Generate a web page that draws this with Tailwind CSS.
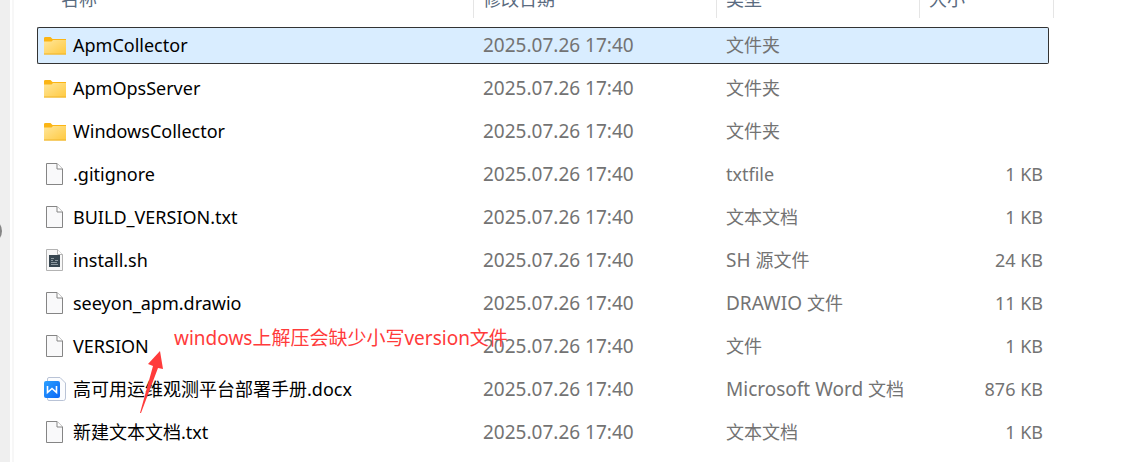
<!DOCTYPE html>
<html lang="zh-CN">
<head>
    <meta charset="UTF-8">
    <meta name="viewport" content="width=device-width, initial-scale=1.0">
    <title>文件列表</title>
    <script src="https://cdn.jsdelivr.net/npm/@tailwindcss/browser@4"></script>
</head>

<body class="relative flex min-h-screen overflow-hidden bg-white font-['Noto_Sans','Noto_Sans_CJK_SC',sans-serif] text-[18px] leading-6 text-[#737373]">
    <!-- 图标 -->
    <svg class="absolute size-0">
        <defs>
            <linearGradient id="folderFill" x1="0" y1="0" x2="1" y2="1">
                <stop offset="0" stop-color="#ffe69a"/>
                <stop offset="1" stop-color="#ffc93f"/>
            </linearGradient>
            <linearGradient id="wordFill" x1="0" y1="0" x2="1" y2="1">
                <stop offset="0" stop-color="#2ba0ff"/>
                <stop offset="1" stop-color="#0a66f5"/>
            </linearGradient>
        </defs>
        <symbol id="folder" viewBox="0 0 22 24">
            <path d="M0 5Q0 4 1.500 4H6.500L8.500 6H22V10H0Z" fill="#fbb515"/>
            <path d="M0 8.500H7.500L9 7H22V21.500H0Z" fill="url(#folderFill)"/>
            <path d="M0 21H22" stroke="#eeb42c"/>
        </symbol>
        <symbol id="file" viewBox="0 -1 22 24">
            <path d="M2.500 0.500H13L18.500 6V21.500H2.500Z" fill="#f9f9fa" stroke="#858585"/>
            <path d="M13 0.500V6H18.500" fill="#fff" stroke="#858585"/>
        </symbol>
        <symbol id="script" viewBox="0 -1 22 24">
            <path d="M2.500 0.500H13.500L18.500 5.500V21.500H2.500Z" fill="#f7f7f7" stroke="#b3b3b3"/>
            <path d="M13.500 0.500V5.500H18.500" fill="#fff" stroke="#b3b3b3"/>
            <path d="M5 6H16V18H5Z" fill="#374650"/>
            <path d="M7 9.500H10M7 11.500H9M7 13.500H13M7 15.500H14M11 11.500H14" stroke="#8d989f"/>
        </symbol>
        <symbol id="word" viewBox="0 0 22 24">
            <path d="M5 0.500H16L21.500 6V21Q21.500 23.500 19.500 23.500H5Q3.500 23.500 3.500 22V2Q3.500 0.500 5 0.500Z" fill="#fbfcfe" stroke="#b9c3d6"/>
            <rect x="0" y="4" width="16" height="17" rx="2" fill="url(#wordFill)"/>
            <path d="M3.500 9V15.500L8 11.500L12.500 15.500V9" fill="none" stroke="#fff" stroke-width="1.600"/>
        </symbol>
    </svg>

    <aside class="flex w-[10px] shrink-0 items-center overflow-hidden bg-[#efefef]">
        <div class="-ml-[22px] size-6 shrink-0 rounded-full bg-[#858585]"></div>
    </aside>

    <main class="ml-[2px] grow border-l-2 border-[#f7f7f7] pr-[83px] pl-[23px]">
        <table class="-mt-[27px] w-full table-fixed border-separate border-spacing-x-0 border-spacing-y-[6px] whitespace-nowrap">
            <colgroup>
                <col>
                <col class="w-[243px]">
                <col class="w-[203px]">
                <col class="w-[129px]">
                <col class="w-[5px]">
            </colgroup>
            <thead class="text-left text-[#5a6b80]">
                <tr class="h-[42px] align-top">
                    <th class="p-0 font-normal"><button class="flex h-[39px] w-full items-center border-r border-[#e5e5e5] pl-6">名称</button></th>
                    <th class="p-0 font-normal"><button class="flex h-[39px] w-full items-center border-r border-[#e5e5e5] pl-[9px]">修改日期</button></th>
                    <th class="p-0 font-normal"><button class="flex h-[39px] w-full items-center border-r border-[#e5e5e5] pl-[9px]">类型</button></th>
                    <th class="p-0 font-normal" colspan="2"><button class="flex h-[39px] w-full items-center border-r border-[#e5e5e5] pl-[9px]">大小</button></th>
                </tr>
            </thead>
            <tbody>
                <tr class="h-[37px]">
                    <td class="rounded-l-xs border-y border-l border-[#333] bg-[#d9edff] pt-0 pb-[2px] pl-[6px] text-black"><div class="flex items-center gap-[7px]"><svg class="h-6 w-[22px]"><use href="#folder"/></svg>ApmCollector</div></td>
                    <td class="border-y border-[#333] bg-[#d9edff] pt-0 pb-[2px] pl-[9px] text-[19px]">2025.07.26 17:40</td>
                    <td class="border-y border-[#333] bg-[#d9edff] pt-0 pb-[2px] pl-[9px]">文件夹</td>
                    <td class="rounded-r-xs border-y border-r border-[#333] bg-[#d9edff] p-0"></td>
                </tr>
                <tr class="h-[37px]">
                    <td class="pt-0 pb-[2px] pl-[7px] text-black"><div class="flex items-center gap-[7px]"><svg class="h-6 w-[22px]"><use href="#folder"/></svg>ApmOpsServer</div></td>
                    <td class="pt-0 pb-[2px] pl-[9px] text-[19px]">2025.07.26 17:40</td>
                    <td class="pt-0 pb-[2px] pl-[9px]">文件夹</td>
                    <td class="p-0"></td>
                </tr>
                <tr class="h-[37px]">
                    <td class="pt-0 pb-[2px] pl-[7px] text-black"><div class="flex items-center gap-[7px]"><svg class="h-6 w-[22px]"><use href="#folder"/></svg>WindowsCollector</div></td>
                    <td class="pt-0 pb-[2px] pl-[9px] text-[19px]">2025.07.26 17:40</td>
                    <td class="pt-0 pb-[2px] pl-[9px]">文件夹</td>
                    <td class="p-0"></td>
                </tr>
                <tr class="h-[37px]">
                    <td class="pt-0 pb-[2px] pl-[7px] text-black"><div class="flex items-center gap-[7px]"><svg class="h-6 w-[22px]"><use href="#file"/></svg>.gitignore</div></td>
                    <td class="pt-0 pb-[2px] pl-[9px] text-[19px]">2025.07.26 17:40</td>
                    <td class="pt-0 pb-[2px] pl-[9px]">txtfile</td>
                    <td class="pt-0 pr-[6px] pb-[2px] text-right">1 KB</td>
                </tr>
                <tr class="h-[37px]">
                    <td class="pt-0 pb-[2px] pl-[7px] text-black"><div class="flex items-center gap-[7px]"><svg class="h-6 w-[22px]"><use href="#file"/></svg>BUILD_VERSION.txt</div></td>
                    <td class="pt-0 pb-[2px] pl-[9px] text-[19px]">2025.07.26 17:40</td>
                    <td class="pt-0 pb-[2px] pl-[9px]">文本文档</td>
                    <td class="pt-0 pr-[6px] pb-[2px] text-right">1 KB</td>
                </tr>
                <tr class="h-[37px]">
                    <td class="pt-0 pb-[2px] pl-[7px] text-black"><div class="flex items-center gap-[7px]"><svg class="h-6 w-[22px]"><use href="#script"/></svg>install.sh</div></td>
                    <td class="pt-0 pb-[2px] pl-[9px] text-[19px]">2025.07.26 17:40</td>
                    <td class="pt-0 pb-[2px] pl-[9px]"><span class="text-[19px]">SH </span>源文件</td>
                    <td class="pt-0 pr-[6px] pb-[2px] text-right">24 KB</td>
                </tr>
                <tr class="h-[37px]">
                    <td class="pt-0 pb-[2px] pl-[7px] text-black"><div class="flex items-center gap-[7px]"><svg class="h-6 w-[22px]"><use href="#file"/></svg>seeyon_apm.drawio</div></td>
                    <td class="pt-0 pb-[2px] pl-[9px] text-[19px]">2025.07.26 17:40</td>
                    <td class="pt-0 pb-[2px] pl-[9px]"><span class="text-[19px]">DRAWIO </span>文件</td>
                    <td class="pt-0 pr-[6px] pb-[2px] text-right">11 KB</td>
                </tr>
                <tr class="h-[37px]">
                    <td class="pt-0 pb-[2px] pl-[7px] text-black"><div class="flex items-center gap-[7px]"><svg class="h-6 w-[22px]"><use href="#file"/></svg>VERSION</div></td>
                    <td class="pt-0 pb-[2px] pl-[9px] text-[19px]">2025.07.26 17:40</td>
                    <td class="pt-0 pb-[2px] pl-[9px]">文件</td>
                    <td class="pt-0 pr-[6px] pb-[2px] text-right">1 KB</td>
                </tr>
                <tr class="h-[37px]">
                    <td class="pt-0 pb-[2px] pl-[7px] text-black"><div class="flex items-center gap-[7px]"><svg class="h-6 w-[22px]"><use href="#word"/></svg>高可用运维观测平台部署手册.docx</div></td>
                    <td class="pt-0 pb-[2px] pl-[9px] text-[19px]">2025.07.26 17:40</td>
                    <td class="pt-0 pb-[2px] pl-[9px]"><span class="text-[19px]">Microsoft Word </span>文档</td>
                    <td class="pt-0 pr-[6px] pb-[2px] text-right">876 KB</td>
                </tr>
                <tr class="h-[37px]">
                    <td class="pt-0 pb-[2px] pl-[7px] text-black"><div class="flex items-center gap-[7px]"><svg class="h-6 w-[22px]"><use href="#file"/></svg>新建文本文档.txt</div></td>
                    <td class="pt-0 pb-[2px] pl-[9px] text-[19px]">2025.07.26 17:40</td>
                    <td class="pt-0 pb-[2px] pl-[9px]">文本文档</td>
                    <td class="pt-0 pr-[6px] pb-[2px] text-right">1 KB</td>
                </tr>
            </tbody>
        </table>
    </main>

    <!-- 红色标注 -->
    <p class="absolute top-[326px] left-[174px] text-[19px] whitespace-nowrap text-[#ff3b3b]">windows上解压会缺少小写version文件</p>
    <svg class="absolute top-[350px] left-[138px] h-[64px] w-[28px]" viewBox="0 0 28 64">
        <path d="M22 1L10 14L15 16L2 63L3 63L20 18L25 19Z" fill="#ff3b3b"/>
    </svg>
</body>
</html>
